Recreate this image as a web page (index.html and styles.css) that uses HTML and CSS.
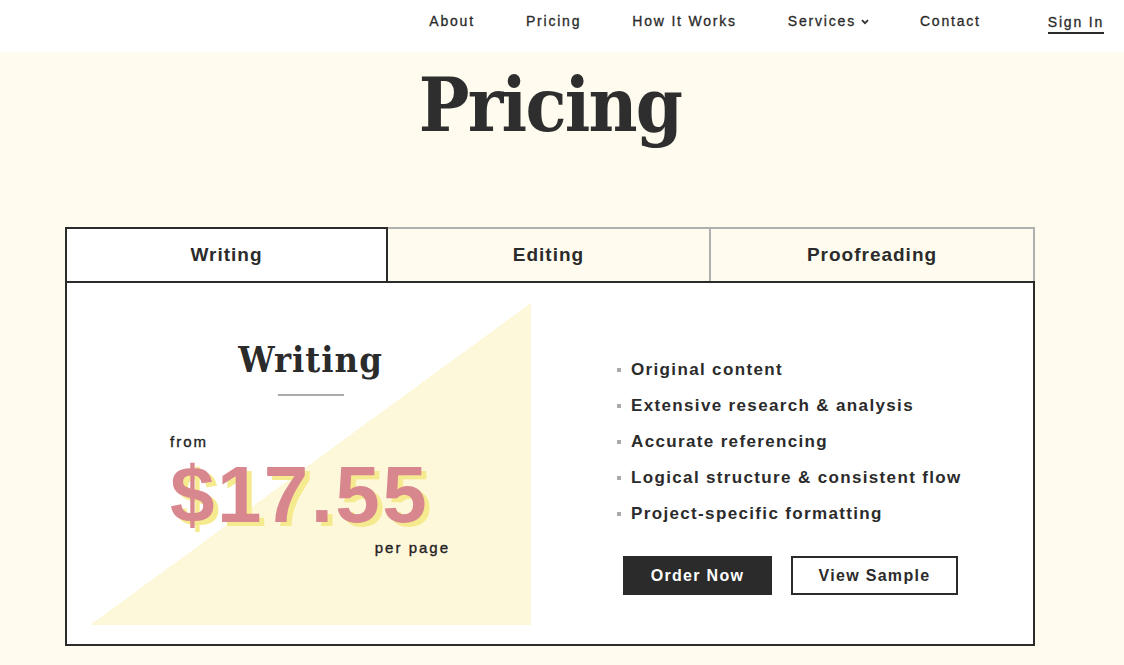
FILE: index.html
```html
<!DOCTYPE html>
<html lang="en">
<head>
<meta charset="utf-8">
<title>Pricing</title>
<link rel="stylesheet" href="styles.css">
</head>
<body>
<header class="site-header">
  <nav class="nav">
    <a class="nav-link" href="#">About</a>
    <a class="nav-link" href="#">Pricing</a>
    <a class="nav-link" href="#">How It Works</a>
    <a class="nav-link nav-drop" href="#">Services <svg class="chev" width="8" height="6" viewBox="0 0 8 6"><path d="M1 1.2 L4 4.2 L7 1.2" fill="none" stroke="#333" stroke-width="1.8"/></svg></a>
    <a class="nav-link" href="#">Contact</a>
    <a class="nav-link nav-signin" href="#">Sign In</a>
  </nav>
</header>
<main class="page">
  <h1 class="page-title">Pricing</h1>
  <section class="pricing">
    <div class="tabs">
      <div class="tab tab-active">Writing</div>
      <div class="tab">Editing</div>
      <div class="tab">Proofreading</div>
    </div>
    <div class="card">
      <div class="price-panel">
        <h2 class="plan-title">Writing</h2>
        <div class="plan-rule"></div>
        <div class="price-block">
          <div class="from">from</div>
          <div class="price">$17.55</div>
          <div class="per">per page</div>
        </div>
      </div>
      <div class="details">
        <ul class="features">
          <li>Original content</li>
          <li>Extensive research &amp; analysis</li>
          <li>Accurate referencing</li>
          <li>Logical structure &amp; consistent flow</li>
          <li>Project-specific formatting</li>
        </ul>
        <div class="actions">
          <a class="btn btn-dark" href="#">Order Now</a>
          <a class="btn btn-light" href="#">View Sample</a>
        </div>
      </div>
    </div>
  </section>
</main>
</body>
</html>
```
FILE: styles.css
```css
* { box-sizing: border-box; }
html, body { margin: 0; padding: 0; }
body {
  background: #fffcef;
  font-family: "Liberation Sans", Arial, sans-serif;
  color: #2b2b2b;
  height: 665px;
  overflow: hidden;
}
a { color: inherit; text-decoration: none; }

.site-header {
  background: #ffffff;
  height: 52px;
}
.nav {
  display: flex;
  justify-content: flex-end;
  align-items: center;
  gap: 51px;
  height: 42px;
  padding-right: 20px;
}
.nav-link {
  font-size: 14px;
  letter-spacing: 1.8px;
  color: #2a2a2a;
  -webkit-text-stroke: 0.3px #2a2a2a;
  line-height: 18px;
  display: inline-flex;
  align-items: center;
}
.chev { margin-left: 5px; margin-top: 2px; }
.nav-signin {
  border-bottom: 2px solid #2b2b2b;
  padding-bottom: 1px;
  margin-top: 5px;
  margin-left: 16px;
}

.page {
  width: 970px;
  margin-left: 65px;
  padding-top: 13px;
}
.page-title {
  margin: 0;
  text-align: center;
  font-family: "DejaVu Serif Condensed", "DejaVu Serif", "Liberation Serif", serif;
  font-stretch: condensed;
  font-weight: bold;
  font-size: 75px;
  letter-spacing: -1.8px;
  line-height: 80px;
  color: #2e2e2e;
}

.pricing {
  margin-top: 82px;
}
.tabs {
  display: grid;
  grid-template-columns: 323px 323px 324px;
}
.tab {
  height: 54px;
  display: flex;
  align-items: center;
  justify-content: center;
  font-size: 19px;
  font-weight: bold;
  letter-spacing: 1px;
  color: #2b2b2b;
  background: #fffcef;
  border: 2px solid #b0b0b0;
  border-bottom: none;
  border-left: none;
}
.tab:last-child { border-right: 2px solid #b0b0b0; }
.tab-active {
  background: #ffffff;
  border: 2px solid #2b2b2b;
  border-bottom: none;
}
.card {
  display: flex;
  background: #ffffff;
  border: 2px solid #2b2b2b;
  height: 365px;
  padding: 20px 0 19px 23px;
}
.price-panel {
  width: 441px;
  background: linear-gradient(to top left, #fef8db 50%, rgba(254, 248, 219, 0) 50%);
  display: flex;
  flex-direction: column;
  align-items: center;
}
.plan-title {
  margin: 34px 0 0;
  font-family: "DejaVu Serif Condensed", "DejaVu Serif", "Liberation Serif", serif;
  font-stretch: condensed;
  font-weight: bold;
  font-size: 36px;
  letter-spacing: 1px;
  line-height: 44px;
  color: #2b2b2b;
}
.plan-rule {
  width: 66px;
  height: 2px;
  background: #aaaaaa;
  margin-top: 13px;
}
.price-block {
  align-self: flex-start;
  margin: 37px 0 0 80px;
  width: 280px;
  display: flex;
  flex-direction: column;
}
.from, .per {
  font-size: 15px;
  letter-spacing: 2px;
  line-height: 18px;
  color: #222222;
  -webkit-text-stroke: 0.35px #222222;
}
.price {
  font-size: 80px;
  font-weight: bold;
  letter-spacing: 2.4px;
  line-height: 64px;
  color: #d8878f;
  text-shadow: 5px 4px 0 #f6ea8e;
  margin-top: 12px;
}
.per { align-self: flex-end; margin-top: 12px; }

.details {
  padding: 49px 0 0 86px;
}
.features {
  list-style: none;
  margin: 0;
  padding: 0;
}
.features li {
  display: flex;
  align-items: center;
  font-size: 17px;
  font-weight: bold;
  letter-spacing: 1.35px;
  line-height: 36px;
  color: #2b2b2b;
}
.features li::before {
  content: "";
  width: 4px;
  height: 4px;
  background: #a9a9a9;
  margin-right: 10px;
  flex: none;
}
.actions {
  display: flex;
  gap: 19px;
  margin: 24px 0 0 6px;
}
.btn {
  height: 39px;
  display: flex;
  align-items: center;
  justify-content: center;
  font-size: 16px;
  font-weight: bold;
  letter-spacing: 1.3px;
}
.btn-dark {
  width: 149px;
  background: #2b2b2b;
  color: #ffffff;
}
.btn-light {
  width: 167px;
  background: #ffffff;
  border: 2px solid #2b2b2b;
  color: #2b2b2b;
}
```
